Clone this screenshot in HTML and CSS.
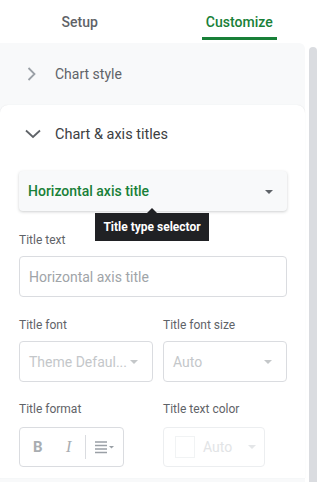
FILE: index.html
```html
<!DOCTYPE html>
<html>
<head>
<meta charset="utf-8">
<link rel="stylesheet" href="styles.css">
</head>
<body>
<div class="tabs">
  <div class="tab"><span class="tab-label">Setup</span></div>
  <div class="tab active"><span class="tab-label">Customize</span></div>
</div>
<div class="body">
  <div class="panel">
    <div class="section collapsed">
      <svg class="chev" width="16" height="16" viewBox="0 0 16 16"><path d="M5.5 2 L11.5 8 L5.5 14" fill="none" stroke="#9aa0a6" stroke-width="1.8"/></svg>
      <span>Chart style</span>
    </div>
    <div class="card">
      <div class="section open">
        <svg class="chev" width="18" height="16" viewBox="0 0 18 16"><path d="M2 4.5 L9 11 L16 4.5" fill="none" stroke="#5f6368" stroke-width="1.8"/></svg>
        <span>Chart &amp; axis titles</span>
      </div>
      <div class="dropdown">
        <span>Horizontal axis title</span>
        <span class="caret dark"></span>
        <div class="tooltip">Title type selector</div>
      </div>
      <div class="label first">Title text</div>
      <div class="input">Horizontal axis title</div>
      <div class="grid">
        <div class="label">Title font</div>
        <div class="label">Title font size</div>
        <div class="select"><span>Theme Defaul...</span><span class="caret"></span></div>
        <div class="select"><span>Auto</span><span class="caret"></span></div>
        <div class="label">Title format</div>
        <div class="label">Title text color</div>
        <div class="format">
          <span class="fb">B</span>
          <span class="fi">I</span>
          <span class="divider"></span>
          <svg class="align" width="22" height="14" viewBox="0 0 22 14"><path d="M1 2h12M1 5.5h12M1 9h12M1 12.5h12" stroke="#9aa0a6" stroke-width="1.3"/><path d="M15 6l2.5 2.5L20 6z" fill="#9aa0a6"/></svg>
        </div>
        <div class="color">
          <span class="swatch"></span>
          <span>Auto</span>
          <span class="caret faint"></span>
        </div>
      </div>
    </div>
  </div>
  <div class="scroll"><div class="thumb"></div></div>
</div>
</body>
</html>
```
FILE: styles.css
```css
* { box-sizing: border-box; }
html, body { margin: 0; padding: 0; background: #fff; }
body {
  width: 319px;
  height: 482px;
  overflow: hidden;
  font-family: Roboto, "Liberation Sans", sans-serif;
  color: #3c4043;
}
.tabs {
  display: flex;
  height: 43px;
}
.tab {
  flex: 1;
  display: flex;
  justify-content: center;
  align-items: flex-start;
  font-size: 14px;
  font-weight: 500;
  color: #5f6368;
}
.tab.active { color: #188038; }
.tab-label {
  padding: 13px 4px 6px;
  line-height: 18px;
  border-bottom: 3px solid transparent;
}
.tab.active .tab-label {
  border-bottom-color: #188038;
  border-radius: 2px 2px 0 0;
}
.body {
  display: flex;
  height: 439px;
}
.panel {
  width: 305px;
  background: #f8f9fa;
  border-radius: 0 6px 0 0;
}
.scroll {
  flex: 1;
  padding: 4px 2px 0 4px;
}
.thumb {
  width: 8px;
  height: 100%;
  background: #dadce0;
  border-radius: 4px 4px 0 0;
}
.section {
  display: flex;
  align-items: center;
  font-size: 14px;
}
.section.collapsed {
  height: 62px;
  padding-left: 23px;
  color: #5f6368;
}
.section.collapsed .chev { margin-right: 16px; }
.section.open {
  height: 56px;
  padding-left: 5px;
  padding-top: 2px;
  color: #3c4043;
  font-size: 14.5px;
}
.section.open .chev { margin-right: 13px; }
.card {
  background: #fff;
  border-radius: 8px 8px 0 0;
  padding: 0 18px 11px 19px;
  box-shadow: 0 0 1px rgba(60,64,67,.15);
}
.dropdown {
  position: relative;
  margin-top: 10px;
  height: 40px;
  background: #f8f9fa;
  border-radius: 4px;
  box-shadow: 0 1px 3px rgba(60,64,67,.25);
  display: flex;
  align-items: center;
  justify-content: space-between;
  padding: 0 14px 0 9px;
  color: #188038;
  font-weight: 500;
  font-size: 14px;
}
.caret {
  width: 0; height: 0;
  border-left: 4px solid transparent;
  border-right: 4px solid transparent;
  border-top: 4px solid #c4c7c9;
}
.caret.dark { border-top-color: #5f6368; margin-top: 1px; }
.caret.faint { border-top-color: #e4e6e8; }
.tooltip {
  position: absolute;
  left: 76px;
  top: 42px;
  width: 114px;
  height: 28px;
  background: #202124;
  color: #fff;
  font-size: 12px;
  font-weight: 700;
  display: flex;
  align-items: center;
  justify-content: center;
  z-index: 2;
}
.tooltip::before {
  content: "";
  position: absolute;
  top: -5px;
  left: 52px;
  border-left: 5px solid transparent;
  border-right: 5px solid transparent;
  border-bottom: 5px solid #202124;
}
.label {
  font-size: 12px;
  line-height: 16px;
  color: #5f6368;
}
.label.first { margin-top: 21px; }
.input {
  margin-top: 8px;
  height: 41px;
  border: 1px solid #dadce0;
  border-radius: 4px;
  display: flex;
  align-items: center;
  padding-left: 9px;
  font-size: 14px;
  color: #a0a4a8;
}
.grid {
  display: grid;
  grid-template-columns: 134px 124px;
  column-gap: 10px;
  margin-top: 20px;
  align-items: start;
}
.grid .select { margin-top: 8px; margin-bottom: 19px; }
.select {
  height: 41px;
  border: 1px solid #dadce0;
  border-radius: 4px;
  display: flex;
  align-items: center;
  justify-content: space-between;
  padding: 0 14px 0 9px;
  font-size: 14px;
  color: #c4c7ca;
}
.format {
  margin-top: 10px;
  width: 105px;
  height: 40px;
  border: 1px solid #dadce0;
  border-radius: 4px;
  display: flex;
  align-items: center;
  padding-left: 13px;
}
.fb {
  font-weight: 700;
  font-size: 15px;
  color: #a9adb1;
  width: 33px;
}
.fi {
  font-family: "Liberation Serif", serif;
  font-style: italic;
  font-size: 16px;
  color: #a9adb1;
  width: 19px;
}
.divider {
  width: 1px;
  height: 24px;
  background: #dadce0;
  margin-right: 8px;
}
.color {
  margin-top: 10px;
  width: 102px;
  height: 40px;
  border: 1px solid #eceef0;
  border-radius: 4px;
  display: flex;
  align-items: center;
  padding-left: 11px;
  font-size: 14px;
  color: #e2e4e6;
}
.swatch {
  width: 20px;
  height: 22px;
  border: 1px solid #f1f3f4;
  margin-right: 8px;
}
.color .caret { margin-left: 16px; }
```
